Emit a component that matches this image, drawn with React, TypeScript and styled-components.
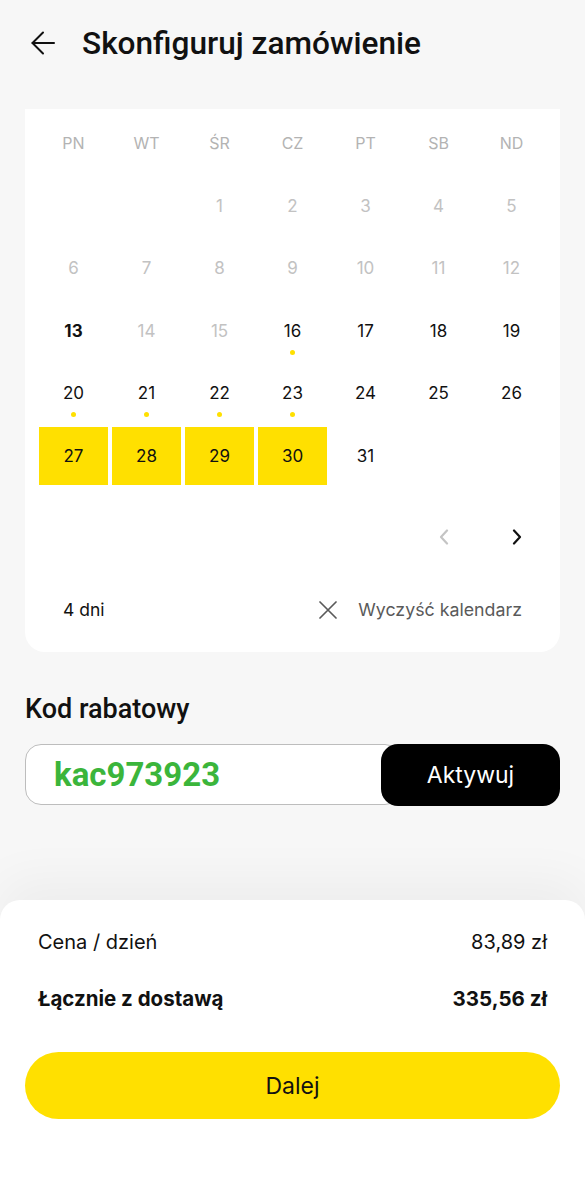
import React from "react";
import styled, { createGlobalStyle } from "styled-components";

const Global = createGlobalStyle`
  html, body { margin: 0; padding: 0; }
  body {
    background: #f7f7f7;
    font-family: Inter, "Noto Sans", Roboto, sans-serif;
    color: #111;
  }
  * { box-sizing: border-box; }
`;

const YELLOW = "#ffe000";

const Page = styled.div`
  width: 585px;
  height: 1184px;
  display: flex;
  flex-direction: column;
  background: #f7f7f7;
  overflow: hidden;
`;

const Header = styled.header`
  height: 86px;
  display: flex;
  align-items: center;
  padding-left: 31px;
  gap: 27px;
`;

const BackButton = styled.button`
  border: 0;
  background: none;
  padding: 0;
  width: 24px;
  height: 24px;
  display: flex;
  align-items: center;
  justify-content: center;
  color: #111;
`;

const Title = styled.h1`
  margin: 0;
  font-family: Roboto, Inter, sans-serif;
  font-size: 31.6px;
  font-weight: 500;
  color: #111;
`;

const Card = styled.section`
  margin: 23px 25px 0;
  background: #fff;
  border-radius: 0 0 20px 20px;
  padding: 5px 14px 22px;
  display: flex;
  flex-direction: column;
`;

const Grid = styled.div`
  display: grid;
  grid-template-columns: repeat(7, 69px);
  grid-auto-rows: 58px;
  column-gap: 4px;
  row-gap: 4.5px;
`;

const Weekday = styled.div`
  display: flex;
  align-items: center;
  justify-content: center;
  font-size: 16px;
  color: #b3b3b3;
`;

type DayKind = "empty" | "disabled" | "today" | "normal" | "selected";

const Day = styled.div<{ $kind: DayKind }>`
  position: relative;
  display: flex;
  align-items: center;
  justify-content: center;
  font-size: 17px;
  font-weight: ${(p) => (p.$kind === "today" ? 700 : 400)};
  color: ${(p) => (p.$kind === "disabled" ? "#c2c2c2" : "#111")};
  background: ${(p) => (p.$kind === "selected" ? YELLOW : "transparent")};
`;

const Dot = styled.span`
  position: absolute;
  left: 50%;
  bottom: 5px;
  width: 5px;
  height: 5px;
  margin-left: -2.5px;
  border-radius: 50%;
  background: ${YELLOW};
`;

const NavRow = styled.div`
  margin-top: 32px;
  height: 40px;
  display: flex;
  justify-content: flex-end;
  align-items: center;
  gap: 53px;
  padding-right: 19px;
`;

const NavButton = styled.button<{ $disabled?: boolean }>`
  border: 0;
  background: none;
  padding: 0;
  width: 20px;
  height: 24px;
  display: flex;
  align-items: center;
  justify-content: center;
  color: ${(p) => (p.$disabled ? "#c4c4c4" : "#111")};
`;

const FooterRow = styled.div`
  margin-top: 33px;
  height: 40px;
  display: flex;
  align-items: center;
  justify-content: space-between;
  padding: 0 24px;
`;

const DaysCount = styled.span`
  font-size: 17.5px;
  color: #111;
`;

const ClearButton = styled.button`
  border: 0;
  background: none;
  padding: 0;
  display: flex;
  align-items: center;
  gap: 21px;
  font-family: inherit;
  font-size: 17.8px;
  color: #5a5a5a;
`;

const Section = styled.section`
  margin: 43px 25px 0;
  display: flex;
  flex-direction: column;
  gap: 21px;
`;

const SectionTitle = styled.h2`
  margin: 0;
  font-family: Roboto, Inter, sans-serif;
  font-size: 27px;
  line-height: 28px;
  font-weight: 500;
  color: #111;
`;

const CodeRow = styled.div`
  display: flex;
  align-items: flex-start;
`;

const CodeInput = styled.div`
  flex: 1;
  height: 61px;
  margin-right: -20px;
  background: #fff;
  border: 1px solid #bdbdbd;
  border-radius: 16px;
  display: flex;
  align-items: center;
  padding-left: 28px;
  font-family: Roboto, Inter, sans-serif;
  font-size: 33px;
  font-weight: 700;
  color: #3bb53b;
`;

const ActivateButton = styled.button`
  position: relative;
  width: 179px;
  height: 62px;
  border: 0;
  border-radius: 17px;
  background: #000;
  color: #fff;
  font-family: inherit;
  font-size: 23px;
  font-weight: 400;
`;

const Spacer = styled.div`
  flex: 1;
`;

const Sheet = styled.footer`
  height: 284px;
  background: #fff;
  border-radius: 20px 20px 0 0;
  box-shadow: 0 -20px 50px rgba(0, 0, 0, 0.045);
  padding: 28px 25px 0;
  display: flex;
  flex-direction: column;
`;

const PriceRow = styled.div<{ $bold?: boolean }>`
  display: flex;
  justify-content: space-between;
  align-items: center;
  padding: 0 13px;
  height: 28px;
  font-size: ${(p) => (p.$bold ? "20.5px" : "20px")};
  font-weight: ${(p) => (p.$bold ? 700 : 400)};
  color: #111;
  & + & {
    margin-top: 28px;
  }
`;

const PrimaryButton = styled.button`
  margin-top: 40px;
  height: 67px;
  border: 0;
  border-radius: 34px;
  background: ${YELLOW};
  color: #111;
  font-family: inherit;
  font-size: 23px;
  font-weight: 400;
`;

const weekdays = ["PN", "WT", "ŚR", "CZ", "PT", "SB", "ND"];

type Cell = { n?: number; kind: DayKind; dot?: boolean };

const cells: Cell[] = [
  { kind: "empty" },
  { kind: "empty" },
  ...[1, 2, 3, 4, 5, 6, 7, 8, 9, 10, 11, 12].map((n) => ({ n, kind: "disabled" as DayKind })),
  { n: 13, kind: "today" },
  { n: 14, kind: "disabled" },
  { n: 15, kind: "disabled" },
  { n: 16, kind: "normal", dot: true },
  { n: 17, kind: "normal" },
  { n: 18, kind: "normal" },
  { n: 19, kind: "normal" },
  { n: 20, kind: "normal", dot: true },
  { n: 21, kind: "normal", dot: true },
  { n: 22, kind: "normal", dot: true },
  { n: 23, kind: "normal", dot: true },
  { n: 24, kind: "normal" },
  { n: 25, kind: "normal" },
  { n: 26, kind: "normal" },
  { n: 27, kind: "selected" },
  { n: 28, kind: "selected" },
  { n: 29, kind: "selected" },
  { n: 30, kind: "selected" },
  { n: 31, kind: "normal" },
];

const ArrowLeftIcon = () => (
  <svg width="24" height="24" viewBox="0 0 24 24" fill="none" stroke="currentColor" strokeWidth="2" strokeLinecap="round" strokeLinejoin="round">
    <path d="M23 12H1.5" />
    <path d="M12 1.5 1.5 12 12 22.5" />
  </svg>
);

const Chevron = ({ dir }: { dir: "left" | "right" }) => (
  <svg width="10" height="16" viewBox="0 0 10 16" fill="none" stroke="currentColor" strokeWidth="2.2" strokeLinecap="round" strokeLinejoin="round">
    {dir === "left" ? <path d="M8 1.5 2 8l6 6.5" /> : <path d="M2 1.5 8 8l-6 6.5" />}
  </svg>
);

const CloseIcon = () => (
  <svg width="18" height="18" viewBox="0 0 18 18" fill="none" stroke="currentColor" strokeWidth="1.7" strokeLinecap="round">
    <path d="M1 1l16 16M17 1 1 17" />
  </svg>
);

export default function App() {
  return (
    <Page>
      <Global />
      <Header>
        <BackButton aria-label="Wstecz">
          <ArrowLeftIcon />
        </BackButton>
        <Title>Skonfiguruj zamówienie</Title>
      </Header>

      <Card>
        <Grid>
          {weekdays.map((w) => (
            <Weekday key={w}>{w}</Weekday>
          ))}
          {cells.map((c, i) => (
            <Day key={i} $kind={c.kind}>
              {c.n}
              {c.dot && <Dot />}
            </Day>
          ))}
        </Grid>
        <NavRow>
          <NavButton $disabled aria-label="Poprzedni">
            <Chevron dir="left" />
          </NavButton>
          <NavButton aria-label="Następny">
            <Chevron dir="right" />
          </NavButton>
        </NavRow>
        <FooterRow>
          <DaysCount>4 dni</DaysCount>
          <ClearButton>
            <CloseIcon />
            Wyczyść kalendarz
          </ClearButton>
        </FooterRow>
      </Card>

      <Section>
        <SectionTitle>Kod rabatowy</SectionTitle>
        <CodeRow>
          <CodeInput>kac973923</CodeInput>
          <ActivateButton>Aktywuj</ActivateButton>
        </CodeRow>
      </Section>

      <Spacer />

      <Sheet>
        <PriceRow>
          <span>Cena / dzień</span>
          <span>83,89 zł</span>
        </PriceRow>
        <PriceRow $bold>
          <span>Łącznie z dostawą</span>
          <span>335,56 zł</span>
        </PriceRow>
        <PrimaryButton>Dalej</PrimaryButton>
      </Sheet>
    </Page>
  );
}
